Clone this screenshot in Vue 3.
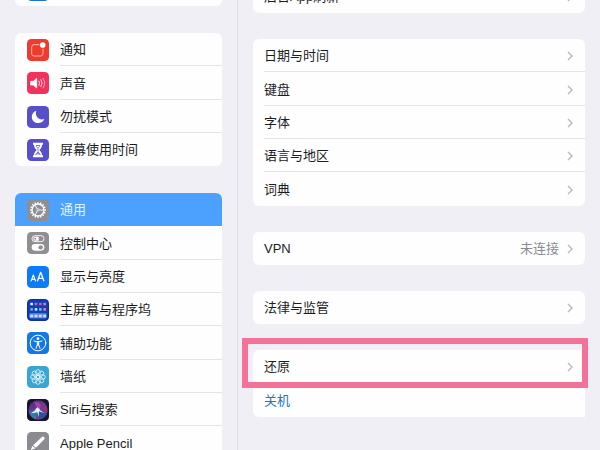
<script setup>
const sidebar = [
  [{ icon: 'bluetooth', label: '蓝牙' }],
  [
    { icon: 'bell', label: '通知' },
    { icon: 'sound', label: '声音' },
    { icon: 'moon', label: '勿扰模式' },
    { icon: 'hourglass', label: '屏幕使用时间' },
  ],
  [
    { icon: 'gear', label: '通用', selected: true },
    { icon: 'control', label: '控制中心' },
    { icon: 'display', label: '显示与亮度' },
    { icon: 'home', label: '主屏幕与程序坞' },
    { icon: 'access', label: '辅助功能' },
    { icon: 'wallpaper', label: '墙纸' },
    { icon: 'siri', label: 'Siri与搜索' },
    { icon: 'pencil', label: 'Apple Pencil' },
  ],
]

const detail = [
  [{ label: '后台App刷新', arrow: true }],
  [
    { label: '日期与时间', arrow: true },
    { label: '键盘', arrow: true },
    { label: '字体', arrow: true },
    { label: '语言与地区', arrow: true },
    { label: '词典', arrow: true },
  ],
  [{ label: 'VPN', value: '未连接', arrow: true }],
  [{ label: '法律与监管', arrow: true }],
  [
    { label: '还原', arrow: true, marked: true },
    { label: '关机', action: true },
  ],
]

const fills = {
  bluetooth: '#1a72d2',
  bell: '#ee3a2f',
  sound: '#f3315d',
  moon: '#5850c8',
  hourglass: '#5850c8',
  gear: '#8e8e93',
  control: '#8f8f93',
  display: '#0a7cf5',
  home: '#0d2f9c',
  access: '#1478e4',
  wallpaper: '#38a5d3',
  siri: '#17152b',
  pencil: '#8b8b90',
}

const petals = [0, 45, 90, 135, 180, 225, 270, 315]
const teeth = Array.from({ length: 16 }, (_, i) => i * 22.5)
const tiles = [
  '#e8ecff', '#9a6be0', '#c65bb8', '#d477c8',
  '#5fa8f0', '#c9e4ff', '#67c4d8', '#e07aa8',
]
</script>

<template>
  <div class="settings">
    <nav class="pane side" aria-label="设置">
      <ul v-for="(group, g) in sidebar" :key="g" class="card">
        <li v-for="item in group" :key="item.label">
          <a href="#" class="row" :class="{ selected: item.selected }">
            <svg class="icon" viewBox="0 0 66 66" aria-hidden="true">
              <rect width="66" height="66" rx="13" :fill="fills[item.icon]" />
              <g v-if="item.icon === 'bell'" fill="none" stroke="#ffd0ca" stroke-width="2.6">
                <path d="M37 17H21a7 7 0 0 0-7 7v20a7 7 0 0 0 7 7h20a7 7 0 0 0 7-7V29" />
                <circle cx="47" cy="18" r="8.5" fill="#fff" stroke="none" />
              </g>
              <g v-else-if="item.icon === 'sound'" fill="none" stroke="#fff" stroke-linecap="round" stroke-width="2.6">
                <path d="M12 28h7l10-9v29l-10-9h-7z" fill="#fff" stroke-linejoin="round" />
                <path d="M36 27q4 6 0 13M42 23q7 10 0 21" />
                <path d="M48 19q11 14 0 29" stroke="#ffb3c6" />
              </g>
              <path v-else-if="item.icon === 'moon'" fill="#fff" d="M28 14C8 20 11 51 34 51Q47 51 52 39Q39 43 32 35Q24 27 28 14z" />
              <g v-else-if="item.icon === 'hourglass'">
                <path fill="#fff" d="M18 11h30v6h-3c0 8-4 12-8 16c4 4 8 8 8 16h3v6H18v-6h3c0-8 4-12 8-16c-4-4-8-8-8-16h-3z" />
                <path fill="#5850c8" d="M26 19h14q-1 5-6 9v11q6 4 7 9H25q1-5 7-9V28q-5-4-6-9z" />
                <path fill="#fff" d="M28 21h10l-5 6zM27 47q6-7 12 0z" />
              </g>
              <g v-else-if="item.icon === 'gear'" fill="none" stroke="#fff">
                <path v-for="t in teeth" :key="t" d="M33 9v5" stroke-width="4" :transform="`rotate(${t} 33 33)`" />
                <circle cx="33" cy="33" r="18" stroke-width="4" />
                <circle cx="33" cy="33" r="3.5" stroke-width="2" />
                <path d="M37 33h13M31 30l-7-12M31 36l-7 12" stroke-width="2.6" />
              </g>
              <g v-else-if="item.icon === 'control'">
                <rect x="15" y="11" width="36" height="18" rx="9" fill="none" stroke="#fff" stroke-width="2.6" />
                <path d="M25 14h10v12H25a6 6 0 0 1 0-12z" fill="#fff" />
                <circle cx="25" cy="20" r="3" fill="#8f8f93" />
                <rect x="14" y="36" width="38" height="20" rx="10" fill="#fff" />
                <circle cx="41" cy="46" r="6.5" fill="#8f8f93" />
              </g>
              <g v-else-if="item.icon === 'display'" fill="none" stroke="#fff" stroke-linejoin="round">
                <path d="M12 46l7-19l7 19M15 40h9" stroke-width="3.4" />
                <path d="M31 46l10-27l10 27M35 37h12" stroke-width="4" />
              </g>
              <g v-else-if="item.icon === 'home'">
                <rect x="4" y="4" width="58" height="58" rx="10" fill="#143fb4" />
                <rect
                  v-for="(c, i) in tiles" :key="i" :fill="c" width="8" height="8" rx="2"
                  :x="10 + (i % 4) * 13" :y="i < 4 ? 11 : 27"
                />
                <rect x="7" y="43" width="52" height="15" rx="4" fill="#5e91df" />
                <rect v-for="i in 4" :key="'d' + i" :x="-3 + i * 13" y="47" width="8" height="8" rx="2" fill="#c6e0ff" />
              </g>
              <g v-else-if="item.icon === 'access'" fill="none" stroke="#fff" stroke-linecap="round">
                <circle cx="33" cy="33" r="23.5" stroke-width="3" />
                <circle cx="33" cy="20" r="4" fill="#fff" stroke="none" />
                <path d="M21 27l9 2h6l9-2M31 30v8l-4 11M35 30v8l4 11" stroke-width="3" />
                <path d="M33 30v8" stroke-width="5" />
              </g>
              <g v-else-if="item.icon === 'wallpaper'" fill="none" stroke="#e3f6ff" stroke-width="2.6">
                <ellipse
                  v-for="p in petals" :key="p" cx="33" cy="20" rx="7" ry="9"
                  :transform="`rotate(${p} 33 33)`"
                />
                <circle cx="33" cy="33" r="5" />
              </g>
              <g v-else-if="item.icon === 'siri'">
                <defs>
                  <linearGradient id="siri-orb" x1="0" y1="0" x2="1" y2="1">
                    <stop offset="0" stop-color="#40297a" />
                    <stop offset="0.5" stop-color="#7c3690" />
                    <stop offset="1" stop-color="#a82d62" />
                  </linearGradient>
                  <linearGradient id="siri-left" x1="0" y1="0" x2="0" y2="1">
                    <stop offset="0" stop-color="#4a4aa6" />
                    <stop offset="1" stop-color="#1f9aa8" />
                  </linearGradient>
                </defs>
                <circle cx="33" cy="33" r="29" fill="url(#siri-orb)" />
                <path d="M5 34Q20 26 33 32Q30 50 26 61Q8 54 5 34z" fill="url(#siri-left)" />
                <path d="M33 32Q50 34 60 44Q53 60 36 61z" fill="#2c4fa0" />
                <path d="M22 8Q49 8 38 32Q25 24 22 8z" fill="#9a46a8" />
                <path d="M11 43Q24 37 31 24Q38 36 56 42Q43 41 36 37L35 55L31 40Q22 43 11 43z" fill="#c7f5ff" />
                <circle cx="33" cy="33" r="5" fill="#fff" />
              </g>
              <g v-else-if="item.icon === 'pencil'" fill="#fff">
                <path d="M44 16q3-4 7-1t1 7L27 47l-9-7z" />
                <path d="M16 42l9 7l-14 6z" />
              </g>
            </svg>
            <span class="body"><span class="label">{{ item.label }}</span></span>
          </a>
        </li>
      </ul>
    </nav>

    <main class="pane detail">
      <ul v-for="(group, g) in detail" :key="g" class="card">
        <li v-for="item in group" :key="item.label">
          <a href="#" class="row" :class="{ marked: item.marked, action: item.action }">
            <span class="body">
              <span class="label">{{ item.label }}</span>
              <span v-if="item.value" class="value">{{ item.value }}</span>
              <svg v-if="item.arrow" class="arrow" viewBox="0 0 6 10" aria-hidden="true">
                <path d="M1 1l4 4l-4 4" fill="none" stroke="#b9b9bd" stroke-width="1.4" />
              </svg>
            </span>
          </a>
        </li>
      </ul>
    </main>
  </div>
</template>

<style>
body {
  margin: 0;
  background: #f0eff5;
}
</style>

<style scoped>
.settings {
  display: grid;
  grid-template-columns: 238px 1fr;
  height: 100vh;
  overflow: hidden;
  background: #f0eff5;
  color: #1c1c1e;
  font: 13px/20px "Liberation Sans", "Noto Sans CJK SC", sans-serif;
}
.pane {
  display: flex;
  flex-direction: column;
  box-sizing: border-box;
  min-width: 0;
  padding: 0 15px;
  overflow: hidden;
}
.side {
  gap: 27px;
  border-right: 1px solid #dddce2;
}
.detail {
  gap: 26px;
}
/* Both panes are scrolled part of the way down their first group. */
.side .card:first-child {
  margin-top: -27px;
}
.detail .card:first-child {
  margin-top: -20px;
}
.card {
  flex: none;
  margin: 0;
  padding: 0;
  list-style: none;
  background: #fefefe;
  border-radius: 6px;
}
.detail .card:last-child {
  border-bottom-right-radius: 0;
}
.card li {
  height: 33px;
}
.card li:nth-child(3n + 2) {
  height: 34px;
}
.row {
  position: relative;
  display: flex;
  align-items: center;
  gap: 11px;
  box-sizing: border-box;
  height: 100%;
  padding-left: 12px;
  color: inherit;
  text-decoration: none;
}
.detail .row {
  padding-left: 11px;
}
.icon {
  flex: none;
  width: 22px;
  height: 22px;
}
.body {
  display: flex;
  flex: 1;
  align-items: center;
  gap: 8px;
  box-sizing: border-box;
  height: 100%;
  padding: 2px 12px 0 0;
  border-bottom: 1px solid #e4e4e7;
}
li:last-child .body,
.selected .body,
.marked .body {
  border-bottom-color: transparent;
}
.label {
  flex: 1;
  white-space: nowrap;
}
.value {
  color: #8a8a8e;
}
.arrow {
  width: 6px;
  height: 10px;
}
.selected {
  background: #4ca1fe;
  border-radius: 6px 6px 0 0;
  color: #e2f1ff;
}
.row.action {
  color: #1f78b8;
}
.marked::after {
  content: "";
  position: absolute;
  inset: -12px -3px -5px -11px;
  border: 6px solid #f37398;
}
</style>
